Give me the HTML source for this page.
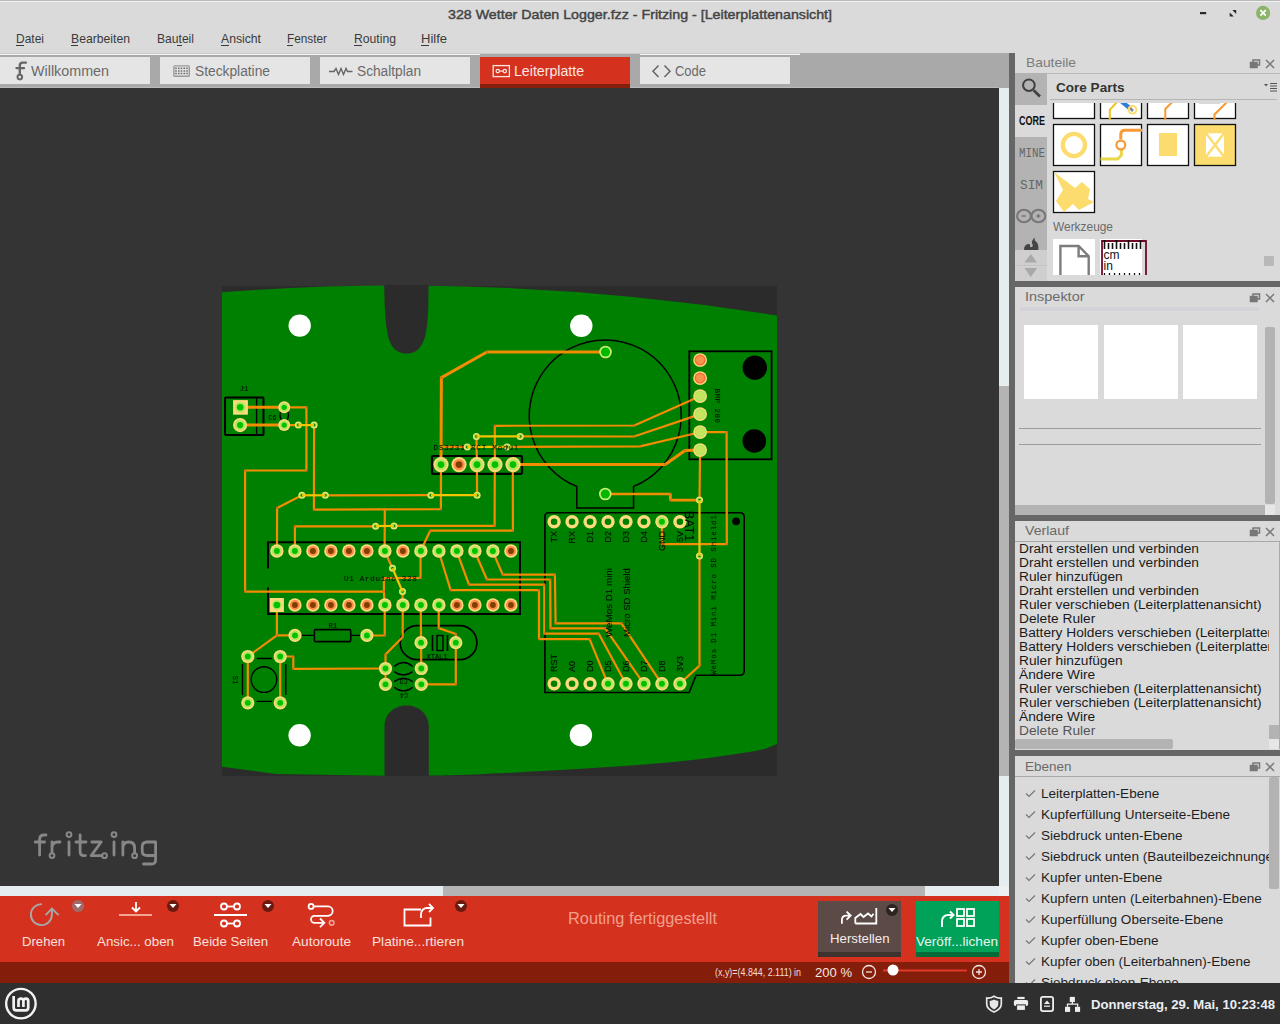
<!DOCTYPE html>
<html><head><meta charset="utf-8">
<style>
*{margin:0;padding:0;box-sizing:border-box}
html,body{width:1280px;height:1024px;overflow:hidden;background:#dadada;font-family:"Liberation Sans",sans-serif;position:relative}
.a{position:absolute}
.t{position:absolute;white-space:nowrap;line-height:1}
svg{position:absolute;overflow:visible}
</style></head><body>
<div class="a" style="left:0px;top:0px;width:1280px;height:1px;background:#b9b9b9;"></div>
<div class="a" style="left:0px;top:1px;width:1280px;height:1px;background:#f2f2f2;"></div>
<div class="t" style="left:448px;top:7.57px;font-size:13.5px;color:#444;font-family:'Liberation Sans',sans-serif;transform:scaleX(1.0537);transform-origin:0 0;-webkit-text-stroke:0.45px #444;">328 Wetter Daten Logger.fzz - Fritzing - [Leiterplattenansicht]</div>
<svg style="left:0;top:0" width="1280" height="28"><rect x="1200" y="12" width="6.2" height="2.2" fill="#2a2a2a"/><path d="M1232.3 10 H1236.2 V13.9 Z M1229.7 12.4 L1233.8 16.5 H1229.7 Z" fill="#2a2a2a"/><circle cx="1263.1" cy="12.9" r="7.1" fill="#8db36a"/><path d="M1260.4 10.2 l5.4 5.4 M1265.8 10.2 l-5.4 5.4" stroke="#fff" stroke-width="1.7"/></svg><div class="t" style="left:16px;top:32.00px;font-size:13px;color:#3a3a3a;font-family:'Liberation Sans',sans-serif;transform:scaleX(0.9226);transform-origin:0 0;">Datei</div>
<div class="t" style="left:71px;top:32.00px;font-size:13px;color:#3a3a3a;font-family:'Liberation Sans',sans-serif;transform:scaleX(0.9383);transform-origin:0 0;">Bearbeiten</div>
<div class="t" style="left:157px;top:32.00px;font-size:13px;color:#3a3a3a;font-family:'Liberation Sans',sans-serif;transform:scaleX(0.9308);transform-origin:0 0;">Bauteil</div>
<div class="t" style="left:221px;top:32.00px;font-size:13px;color:#3a3a3a;font-family:'Liberation Sans',sans-serif;transform:scaleX(0.9383);transform-origin:0 0;">Ansicht</div>
<div class="t" style="left:287px;top:32.00px;font-size:13px;color:#3a3a3a;font-family:'Liberation Sans',sans-serif;transform:scaleX(0.9076);transform-origin:0 0;">Fenster</div>
<div class="t" style="left:354px;top:32.00px;font-size:13px;color:#3a3a3a;font-family:'Liberation Sans',sans-serif;transform:scaleX(0.9373);transform-origin:0 0;">Routing</div>
<div class="t" style="left:421px;top:32.00px;font-size:13px;color:#3a3a3a;font-family:'Liberation Sans',sans-serif;transform:scaleX(0.9997);transform-origin:0 0;">Hilfe</div>
<div class="a" style="left:16px;top:45px;width:8px;height:1px;background:#3a3a3a;"></div>
<div class="a" style="left:71px;top:45px;width:7px;height:1px;background:#3a3a3a;"></div>
<div class="a" style="left:177px;top:45px;width:5px;height:1px;background:#3a3a3a;"></div>
<div class="a" style="left:221px;top:45px;width:8px;height:1px;background:#3a3a3a;"></div>
<div class="a" style="left:287px;top:45px;width:6px;height:1px;background:#3a3a3a;"></div>
<div class="a" style="left:354px;top:45px;width:8px;height:1px;background:#3a3a3a;"></div>
<div class="a" style="left:421px;top:45px;width:8px;height:1px;background:#3a3a3a;"></div>
<div class="a" style="left:0px;top:53px;width:1009px;height:35px;background:#a9a9a9;"></div>
<div class="a" style="left:0px;top:53px;width:800px;height:1px;background:#c8c8c8;"></div>
<div class="a" style="left:0px;top:54px;width:480px;height:1px;background:#f6f6f6;"></div>
<div class="a" style="left:640px;top:54px;width:160px;height:1px;background:#f6f6f6;"></div>
<div class="a" style="left:0px;top:87px;width:999px;height:1px;background:#b9b9b9;"></div>
<div class="a" style="left:0px;top:57px;width:150px;height:27px;background:#e5e5e5;"></div>
<div class="a" style="left:160px;top:57px;width:150px;height:27px;background:#e5e5e5;"></div>
<div class="a" style="left:320px;top:57px;width:150px;height:27px;background:#e5e5e5;"></div>
<div class="a" style="left:640px;top:57px;width:150px;height:27px;background:#e5e5e5;"></div>
<div class="a" style="left:480px;top:57px;width:150px;height:27px;background:#d5311f;"></div>
<div class="a" style="left:480px;top:84px;width:150px;height:4px;background:#85200d;"></div>
<div class="t" style="left:31px;top:64.15px;font-size:14px;color:#6a6a6a;font-family:'Liberation Sans',sans-serif;transform:scaleX(1.0232);transform-origin:0 0;">Willkommen</div>
<div class="t" style="left:195px;top:64.15px;font-size:14px;color:#6a6a6a;font-family:'Liberation Sans',sans-serif;transform:scaleX(0.9833);transform-origin:0 0;">Steckplatine</div>
<div class="t" style="left:357px;top:64.15px;font-size:14px;color:#6a6a6a;font-family:'Liberation Sans',sans-serif;transform:scaleX(0.9789);transform-origin:0 0;">Schaltplan</div>
<div class="t" style="left:514px;top:64.15px;font-size:14px;color:#fbe6e2;font-family:'Liberation Sans',sans-serif;transform:scaleX(1.0105);transform-origin:0 0;">Leiterplatte</div>
<div class="t" style="left:675px;top:64.15px;font-size:14px;color:#6a6a6a;font-family:'Liberation Sans',sans-serif;transform:scaleX(0.9262);transform-origin:0 0;">Code</div>
<svg style="left:0;top:53px" width="800" height="35"><path d="M19.8 21.5 V12.5 Q19.8 9.6 22.6 9.6 L25.9 9.6" stroke="#666" stroke-width="2.4" fill="none" stroke-linecap="round"/><path d="M16.5 15.2 H24" stroke="#666" stroke-width="2.3" stroke-linecap="round"/><circle cx="19.8" cy="24.1" r="2.3" stroke="#666" stroke-width="2" fill="none"/><rect x="173.9" y="12.9" width="15.4" height="10.4" rx="0.8" fill="none" stroke="#9a9a9a" stroke-width="1.4"/><rect x="175.2" y="14.55" width="1.6" height="1.5" fill="#6e6e6e"/><rect x="175.2" y="17.25" width="1.6" height="1.5" fill="#6e6e6e"/><rect x="175.2" y="19.75" width="1.6" height="1.5" fill="#6e6e6e"/><rect x="178" y="14.55" width="1.6" height="1.5" fill="#6e6e6e"/><rect x="178" y="17.25" width="1.6" height="1.5" fill="#6e6e6e"/><rect x="178" y="19.75" width="1.6" height="1.5" fill="#6e6e6e"/><rect x="180.7" y="14.55" width="1.6" height="1.5" fill="#6e6e6e"/><rect x="180.7" y="17.25" width="1.6" height="1.5" fill="#6e6e6e"/><rect x="180.7" y="19.75" width="1.6" height="1.5" fill="#6e6e6e"/><rect x="183.5" y="14.55" width="1.6" height="1.5" fill="#6e6e6e"/><rect x="183.5" y="17.25" width="1.6" height="1.5" fill="#6e6e6e"/><rect x="183.5" y="19.75" width="1.6" height="1.5" fill="#6e6e6e"/><rect x="186.2" y="14.55" width="1.6" height="1.5" fill="#6e6e6e"/><rect x="186.2" y="17.25" width="1.6" height="1.5" fill="#6e6e6e"/><rect x="186.2" y="19.75" width="1.6" height="1.5" fill="#6e6e6e"/><path d="M329 18.5 h5 l2 -3 l2.5 6 l2.5 -6 l2.5 6 l2.5 -6 l1.5 3 h5" stroke="#666" stroke-width="1.4" fill="none"/><rect x="493.2" y="12.6" width="16.2" height="11" fill="none" stroke="#fbe6e2" stroke-width="1.3"/><circle cx="497.8" cy="18.1" r="1.7" fill="none" stroke="#fbe6e2" stroke-width="1.2"/><circle cx="504.8" cy="18.1" r="1.7" fill="none" stroke="#fbe6e2" stroke-width="1.2"/><path d="M499.5 18.1 h3.6" stroke="#fbe6e2" stroke-width="1.2"/><path d="M658.5 12.5 l-5.5 5.8 l5.5 5.8 M664.5 12.5 l5.5 5.8 l-5.5 5.8" stroke="#666" stroke-width="1.5" fill="none"/></svg><div class="a" style="left:0px;top:88px;width:999px;height:798px;background:#343434;overflow:hidden"></div>
<svg style="left:0;top:0" width="1000" height="900"><rect x="222" y="286" width="555" height="490" fill="#2b2b2b"/><path d="M222 292.2 Q499.5 271.4 777 315.5 L777 744.1 C773.75 745.33 770.17 748.07 757.50 750.50 C744.83 752.93 719.75 756.57 701.00 758.90 C682.25 761.23 663.72 762.95 645.00 764.50 C626.28 766.05 607.45 767.02 588.70 768.20 C569.95 769.38 551.28 770.57 532.50 771.60 C513.72 772.63 493.28 773.73 476.00 774.40 C458.72 775.07 436.67 775.40 428.80 775.60 L428.8 727 C428.8 713 418 705.6 406.6 705.6 C395 705.6 384.5 713 384.5 727 L384.5 775.8 L276 774 L222 766.7 Z" fill="#008000"/><path d="M384.2 285 L428.6 285 C428.4 310 428 325 425 337 C421 350 414 353.6 406.5 353.6 C399 353.6 392 350 388.5 338 C385.5 326 384.6 310 384.2 285 Z" fill="#2b2b2b"/><circle cx="299.7" cy="325.6" r="11.2" fill="#fff"/><circle cx="581.3" cy="325.8" r="11.2" fill="#fff"/><circle cx="299.6" cy="735.3" r="11.2" fill="#fff"/><circle cx="580.9" cy="735.2" r="11.2" fill="#fff"/><rect x="225" y="397.5" width="38.5" height="37.5" rx="1" stroke="#000" fill="none" stroke-width="2"/><path d="M256.6 398 V434.5" stroke="#000" fill="none" stroke-width="1.4"/><path d="M281.5 410 q-3 5 0 10 M287 410 q3 5 0 10" stroke="#000" fill="none" stroke-width="1.4"/><path d="M576.8 486.4 A76 76 0 1 1 633.6 486.4 L633.6 507.9 L576.8 507.9 Z" stroke="#000" fill="none" stroke-width="1.5"/><rect x="432" y="456" width="90" height="17.8" rx="1" stroke="#000" fill="none" stroke-width="2.2"/><rect x="689.3" y="351.3" width="82.3" height="108" stroke="#000" fill="none" stroke-width="1.8"/><circle cx="754.8" cy="367.7" r="12.2" fill="#000"/><circle cx="754.3" cy="441" r="11.8" fill="#000"/><path d="M268 568.4 V542.2 H520 V613.9 H268 V587.4" stroke="#000" fill="none" stroke-width="2"/><path d="M544.9 692.5 V516.5 Q544.9 512.7 548.7 512.7 H740 Q744.2 512.7 744.2 517 V671 Q744.2 675.2 740 675.2 H696.1 L689.2 692.5 Z" stroke="#000" fill="none" stroke-width="1.6"/><circle cx="736.1" cy="521.3" r="3.9" fill="#000"/><path d="M300 635.4 H314.4 M350.7 635.4 H362" stroke="#000" fill="none" stroke-width="1.4"/><rect x="314.4" y="629.6" width="36.3" height="12" rx="1.2" stroke="#000" fill="none" stroke-width="1.6"/><circle cx="264" cy="679.6" r="12.8" stroke="#000" fill="none" stroke-width="1.4"/><path d="M256.8 658.5 H272 M256.8 701.4 H272 M242.5 664 V695 M285.8 664 V695" stroke="#000" fill="none" stroke-width="1.4"/><rect x="400.2" y="625.7" width="76.7" height="34" rx="17" stroke="#000" fill="none" stroke-width="1.7"/><path d="M432.5 635 V651 M447.5 635 V651" stroke="#000" fill="none" stroke-width="1.6"/><rect x="437" y="635.5" width="6" height="15" stroke="#000" fill="none" stroke-width="1.4"/><path d="M394.2 666.5 Q403.5 658.7 412.7 666.5 M394.2 671.6 Q403.5 678.4 412.7 671.6 M394.2 681.6 Q403.5 674.8 412.7 681.6 M394.2 687.2 Q403.5 694.6 412.7 687.2" stroke="#000" fill="none" stroke-width="1.4"/><path d="M247 407.3 L284.2 407.3" stroke="#f28c00" stroke-width="3" fill="none" stroke-linejoin="round" stroke-linecap="round"/><path d="M247 425.1 L284.2 425.1" stroke="#f28c00" stroke-width="3" fill="none" stroke-linejoin="round" stroke-linecap="round"/><path d="M284.2 407.3 L306.4 407.3 L306.4 470.5 L245.1 470.5 L245.1 591.6 L383.9 591.6 L384.6 605" stroke="#f28c00" stroke-width="2.2" fill="none" stroke-linejoin="round" stroke-linecap="round"/><path d="M284.2 425.1 L298.3 425.1" stroke="#f28c00" stroke-width="2.2" fill="none" stroke-linejoin="round" stroke-linecap="round"/><path d="M314.1 425.1 L313.9 509.7 L440.9 509.2 L441 464.6" stroke="#f28c00" stroke-width="2.2" fill="none" stroke-linejoin="round" stroke-linecap="round"/><path d="M441 464.6 L441.4 377.6 L486.9 352 L605.5 352" stroke="#f28c00" stroke-width="3" fill="none" stroke-linejoin="round" stroke-linecap="round"/><path d="M441 446.9 L467.2 446.9" stroke="#f28c00" stroke-width="2.2" fill="none" stroke-linejoin="round" stroke-linecap="round"/><path d="M507 446.9 L640 446.4 L689.4 434.7 L700.1 432.1" stroke="#f28c00" stroke-width="2.2" fill="none" stroke-linejoin="round" stroke-linecap="round"/><path d="M476.4 436.4 L476.9 464.6" stroke="#f28c00" stroke-width="2.2" fill="none" stroke-linejoin="round" stroke-linecap="round"/><path d="M520.2 436.4 L634 436.5 L689.4 417.9 L700.1 414" stroke="#f28c00" stroke-width="2.2" fill="none" stroke-linejoin="round" stroke-linecap="round"/><path d="M494.8 464.6 L494.8 425.8 L634.2 425.5 L689.4 401 L700.1 395.9" stroke="#f28c00" stroke-width="2.2" fill="none" stroke-linejoin="round" stroke-linecap="round"/><path d="M512.8 464.6 L665.2 464.5 L685 450.5 L700.1 450" stroke="#f28c00" stroke-width="3" fill="none" stroke-linejoin="round" stroke-linecap="round"/><path d="M700.1 432.1 L726.6 432.1 L726.8 544.2 L661.9 544.2 L661.9 521.8" stroke="#f28c00" stroke-width="2.2" fill="none" stroke-linejoin="round" stroke-linecap="round"/><path d="M700.1 450 L699.5 500.1" stroke="#f28c00" stroke-width="2.2" fill="none" stroke-linejoin="round" stroke-linecap="round"/><path d="M699.5 556.1 L699.5 665.6 L679.7 683.8" stroke="#f28c00" stroke-width="2.2" fill="none" stroke-linejoin="round" stroke-linecap="round"/><path d="M605.3 494 L670.4 494 L670.4 500.1 L699.5 500.1" stroke="#f28c00" stroke-width="2.7" fill="none" stroke-linejoin="round" stroke-linecap="round"/><path d="M301.9 495.3 L277.1 508.1 L277 551" stroke="#f28c00" stroke-width="2.2" fill="none" stroke-linejoin="round" stroke-linecap="round"/><path d="M325.3 495.3 L430.9 495.2" stroke="#f28c00" stroke-width="2.2" fill="none" stroke-linejoin="round" stroke-linecap="round"/><path d="M477.1 495.2 L476.9 464.6" stroke="#f28c00" stroke-width="2.2" fill="none" stroke-linejoin="round" stroke-linecap="round"/><path d="M294.9 551 L294.9 526.4 L375.6 526.4" stroke="#f28c00" stroke-width="2.2" fill="none" stroke-linejoin="round" stroke-linecap="round"/><path d="M394 525.9 L494.6 525.9 L494.8 464.6" stroke="#f28c00" stroke-width="2.2" fill="none" stroke-linejoin="round" stroke-linecap="round"/><path d="M384.8 509.5 L384.6 551" stroke="#f28c00" stroke-width="2.2" fill="none" stroke-linejoin="round" stroke-linecap="round"/><path d="M420.6 551 L430.2 530.7 L512.9 530.7 L512.8 464.6" stroke="#f28c00" stroke-width="2.2" fill="none" stroke-linejoin="round" stroke-linecap="round"/><path d="M384.6 551 L392.5 568.3" stroke="#f28c00" stroke-width="2.2" fill="none" stroke-linejoin="round" stroke-linecap="round"/><path d="M402.5 591.6 L402.6 605" stroke="#f28c00" stroke-width="2.2" fill="none" stroke-linejoin="round" stroke-linecap="round"/><path d="M420.6 551 L420.5 578 L383.9 578 L383.9 591.6" stroke="#f28c00" stroke-width="2.2" fill="none" stroke-linejoin="round" stroke-linecap="round"/><path d="M438.6 551 L450.7 590.2 L539 590.2 L539 639.1 L589.6 639.1 L607.9 683.8" stroke="#f28c00" stroke-width="2.2" fill="none" stroke-linejoin="round" stroke-linecap="round"/><path d="M456.6 551 L469 584.7 L544.3 584.7 L544.3 633.7 L598.8 633.7 L625.8 683.8" stroke="#f28c00" stroke-width="2.2" fill="none" stroke-linejoin="round" stroke-linecap="round"/><path d="M474.6 551 L486.9 579.5 L550.2 579.5 L550.5 628.4 L605.2 628.4 L643.8 683.8" stroke="#f28c00" stroke-width="2.2" fill="none" stroke-linejoin="round" stroke-linecap="round"/><path d="M492.6 551 L502.7 574.6 L554.9 574.6 L555.6 623.4 L621.4 623.4 L661.8 683.8" stroke="#f28c00" stroke-width="2.2" fill="none" stroke-linejoin="round" stroke-linecap="round"/><path d="M276.9 605 L276.9 635.4 L295 635.4" stroke="#f28c00" stroke-width="2.2" fill="none" stroke-linejoin="round" stroke-linecap="round"/><path d="M276.9 635.4 L247.8 656.5" stroke="#f28c00" stroke-width="2.2" fill="none" stroke-linejoin="round" stroke-linecap="round"/><path d="M366.9 635.5 L384.7 635.5 L384.7 605" stroke="#f28c00" stroke-width="2.2" fill="none" stroke-linejoin="round" stroke-linecap="round"/><path d="M247.8 656.5 L247.8 702.8" stroke="#f28c00" stroke-width="2.2" fill="none" stroke-linejoin="round" stroke-linecap="round"/><path d="M280.2 656.5 L280.2 702.8" stroke="#f28c00" stroke-width="2.2" fill="none" stroke-linejoin="round" stroke-linecap="round"/><path d="M280.2 656.5 L293.3 656.5 L293.3 668.8 L385.5 668.5" stroke="#f28c00" stroke-width="2.2" fill="none" stroke-linejoin="round" stroke-linecap="round"/><path d="M402.7 605 L402.7 636.9 L385.5 654.5 L385.5 684.3" stroke="#f28c00" stroke-width="2.2" fill="none" stroke-linejoin="round" stroke-linecap="round"/><path d="M420.7 605 L421.3 668.5" stroke="#f28c00" stroke-width="2.2" fill="none" stroke-linejoin="round" stroke-linecap="round"/><path d="M438.7 605 L438.7 628.1 L455.8 634 L455.8 684.3 L421.3 684.3" stroke="#f28c00" stroke-width="2.2" fill="none" stroke-linejoin="round" stroke-linecap="round"/><rect x="233.1" y="400.1" width="14.8" height="14.6" fill="#fddb7c"/><circle cx="240.4" cy="407.2" r="5.5" fill="#b4e65c"/><circle cx="240.2" cy="407.2" r="3.3" fill="#00c000"/><circle cx="240.1" cy="425.1" r="7.05" fill="#fddb7c"/><circle cx="240.1" cy="425.1" r="5.2875" fill="#b4e65c"/><circle cx="240.1" cy="425.1" r="3.102" fill="#00c000"/><circle cx="284.2" cy="407.3" r="6" fill="#fddb7c"/><circle cx="284.2" cy="407.3" r="4.5" fill="#b4e65c"/><circle cx="284.2" cy="407.3" r="2.64" fill="#00c000"/><circle cx="284.2" cy="425.1" r="6" fill="#fddb7c"/><circle cx="284.2" cy="425.1" r="4.5" fill="#b4e65c"/><circle cx="284.2" cy="425.1" r="2.64" fill="#00c000"/><circle cx="298.3" cy="425.1" r="3.5" fill="#efe27a"/><circle cx="298.3" cy="425.1" r="2.4" fill="#98e63a"/><circle cx="298.3" cy="425.1" r="1.25" fill="#067000"/><circle cx="314.1" cy="425.1" r="3.5" fill="#efe27a"/><circle cx="314.1" cy="425.1" r="2.4" fill="#98e63a"/><circle cx="314.1" cy="425.1" r="1.25" fill="#067000"/><circle cx="476.4" cy="436.4" r="3.5" fill="#efe27a"/><circle cx="476.4" cy="436.4" r="2.4" fill="#98e63a"/><circle cx="476.4" cy="436.4" r="1.25" fill="#067000"/><circle cx="520.2" cy="436.4" r="3.5" fill="#efe27a"/><circle cx="520.2" cy="436.4" r="2.4" fill="#98e63a"/><circle cx="520.2" cy="436.4" r="1.25" fill="#067000"/><circle cx="467.2" cy="446.9" r="3.5" fill="#efe27a"/><circle cx="467.2" cy="446.9" r="2.4" fill="#98e63a"/><circle cx="467.2" cy="446.9" r="1.25" fill="#067000"/><circle cx="507" cy="446.9" r="3.5" fill="#efe27a"/><circle cx="507" cy="446.9" r="2.4" fill="#98e63a"/><circle cx="507" cy="446.9" r="1.25" fill="#067000"/><circle cx="301.9" cy="495.3" r="3.5" fill="#efe27a"/><circle cx="301.9" cy="495.3" r="2.4" fill="#98e63a"/><circle cx="301.9" cy="495.3" r="1.25" fill="#067000"/><circle cx="325.3" cy="495.3" r="3.5" fill="#efe27a"/><circle cx="325.3" cy="495.3" r="2.4" fill="#98e63a"/><circle cx="325.3" cy="495.3" r="1.25" fill="#067000"/><circle cx="430.9" cy="495.2" r="3.5" fill="#efe27a"/><circle cx="430.9" cy="495.2" r="2.4" fill="#98e63a"/><circle cx="430.9" cy="495.2" r="1.25" fill="#067000"/><circle cx="477.1" cy="495.2" r="3.5" fill="#efe27a"/><circle cx="477.1" cy="495.2" r="2.4" fill="#98e63a"/><circle cx="477.1" cy="495.2" r="1.25" fill="#067000"/><circle cx="375.6" cy="526.2" r="3.5" fill="#efe27a"/><circle cx="375.6" cy="526.2" r="2.4" fill="#98e63a"/><circle cx="375.6" cy="526.2" r="1.25" fill="#067000"/><circle cx="394" cy="525.9" r="3.5" fill="#efe27a"/><circle cx="394" cy="525.9" r="2.4" fill="#98e63a"/><circle cx="394" cy="525.9" r="1.25" fill="#067000"/><circle cx="392.5" cy="568.3" r="3.5" fill="#efe27a"/><circle cx="392.5" cy="568.3" r="2.4" fill="#98e63a"/><circle cx="392.5" cy="568.3" r="1.25" fill="#067000"/><circle cx="402.5" cy="591.6" r="3.5" fill="#efe27a"/><circle cx="402.5" cy="591.6" r="2.4" fill="#98e63a"/><circle cx="402.5" cy="591.6" r="1.25" fill="#067000"/><circle cx="699.5" cy="500.1" r="3.5" fill="#efe27a"/><circle cx="699.5" cy="500.1" r="2.4" fill="#98e63a"/><circle cx="699.5" cy="500.1" r="1.25" fill="#067000"/><circle cx="699.5" cy="556.1" r="3.5" fill="#efe27a"/><circle cx="699.5" cy="556.1" r="2.4" fill="#98e63a"/><circle cx="699.5" cy="556.1" r="1.25" fill="#067000"/><circle cx="306.4" cy="407.3" r="1.1" fill="#d8652a"/><circle cx="306.4" cy="470.5" r="1.1" fill="#d8652a"/><circle cx="245.1" cy="470.5" r="1.1" fill="#d8652a"/><circle cx="245.1" cy="591.6" r="1.1" fill="#d8652a"/><circle cx="383.9" cy="591.6" r="1.1" fill="#d8652a"/><circle cx="313.9" cy="509.7" r="1.1" fill="#d8652a"/><circle cx="440.9" cy="509.2" r="1.1" fill="#d8652a"/><circle cx="441.4" cy="377.6" r="1.1" fill="#d8652a"/><circle cx="486.9" cy="352" r="1.1" fill="#d8652a"/><circle cx="640" cy="446.4" r="1.1" fill="#d8652a"/><circle cx="689.4" cy="434.7" r="1.1" fill="#d8652a"/><circle cx="634" cy="436.5" r="1.1" fill="#d8652a"/><circle cx="689.4" cy="417.9" r="1.1" fill="#d8652a"/><circle cx="494.8" cy="425.8" r="1.1" fill="#d8652a"/><circle cx="634.2" cy="425.5" r="1.1" fill="#d8652a"/><circle cx="689.4" cy="401" r="1.1" fill="#d8652a"/><circle cx="665.2" cy="464.5" r="1.1" fill="#d8652a"/><circle cx="685" cy="450.5" r="1.1" fill="#d8652a"/><circle cx="726.6" cy="432.1" r="1.1" fill="#d8652a"/><circle cx="726.8" cy="544.2" r="1.1" fill="#d8652a"/><circle cx="661.9" cy="544.2" r="1.1" fill="#d8652a"/><circle cx="699.5" cy="665.6" r="1.1" fill="#d8652a"/><circle cx="670.4" cy="494" r="1.1" fill="#d8652a"/><circle cx="670.4" cy="500.1" r="1.1" fill="#d8652a"/><circle cx="277.1" cy="508.1" r="1.1" fill="#d8652a"/><circle cx="294.9" cy="526.4" r="1.1" fill="#d8652a"/><circle cx="494.6" cy="525.9" r="1.1" fill="#d8652a"/><circle cx="430.2" cy="530.7" r="1.1" fill="#d8652a"/><circle cx="512.9" cy="530.7" r="1.1" fill="#d8652a"/><circle cx="420.5" cy="578" r="1.1" fill="#d8652a"/><circle cx="383.9" cy="578" r="1.1" fill="#d8652a"/><circle cx="450.7" cy="590.2" r="1.1" fill="#d8652a"/><circle cx="539" cy="590.2" r="1.1" fill="#d8652a"/><circle cx="539" cy="639.1" r="1.1" fill="#d8652a"/><circle cx="589.6" cy="639.1" r="1.1" fill="#d8652a"/><circle cx="469" cy="584.7" r="1.1" fill="#d8652a"/><circle cx="544.3" cy="584.7" r="1.1" fill="#d8652a"/><circle cx="544.3" cy="633.7" r="1.1" fill="#d8652a"/><circle cx="598.8" cy="633.7" r="1.1" fill="#d8652a"/><circle cx="486.9" cy="579.5" r="1.1" fill="#d8652a"/><circle cx="550.2" cy="579.5" r="1.1" fill="#d8652a"/><circle cx="550.5" cy="628.4" r="1.1" fill="#d8652a"/><circle cx="605.2" cy="628.4" r="1.1" fill="#d8652a"/><circle cx="502.7" cy="574.6" r="1.1" fill="#d8652a"/><circle cx="554.9" cy="574.6" r="1.1" fill="#d8652a"/><circle cx="555.6" cy="623.4" r="1.1" fill="#d8652a"/><circle cx="621.4" cy="623.4" r="1.1" fill="#d8652a"/><circle cx="276.9" cy="635.4" r="1.1" fill="#d8652a"/><circle cx="384.7" cy="635.5" r="1.1" fill="#d8652a"/><circle cx="293.3" cy="656.5" r="1.1" fill="#d8652a"/><circle cx="293.3" cy="668.8" r="1.1" fill="#d8652a"/><circle cx="402.7" cy="636.9" r="1.1" fill="#d8652a"/><circle cx="385.5" cy="654.5" r="1.1" fill="#d8652a"/><circle cx="438.7" cy="628.1" r="1.1" fill="#d8652a"/><circle cx="455.8" cy="634" r="1.1" fill="#d8652a"/><circle cx="455.8" cy="684.3" r="1.1" fill="#d8652a"/><path d="M298.3 425.1 L314.1 425.1" stroke="#f5c400" stroke-width="2.2" fill="none" stroke-linecap="butt"/><path d="M467.2 446.9 L507 446.9" stroke="#f5c400" stroke-width="2.2" fill="none" stroke-linecap="butt"/><path d="M476.4 436.4 L520.2 436.4" stroke="#f5c400" stroke-width="2.2" fill="none" stroke-linecap="butt"/><path d="M699.5 500.1 L699.5 556.1" stroke="#f5c400" stroke-width="2.2" fill="none" stroke-linecap="butt"/><path d="M301.9 495.3 L325.3 495.3" stroke="#f5c400" stroke-width="2.2" fill="none" stroke-linecap="butt"/><path d="M430.9 495.2 L477.1 495.2" stroke="#f5c400" stroke-width="2.2" fill="none" stroke-linecap="butt"/><path d="M375.6 526 L394 526" stroke="#f5c400" stroke-width="2.2" fill="none" stroke-linecap="butt"/><path d="M392.5 568.3 L402.5 591.6" stroke="#f5c400" stroke-width="2.2" fill="none" stroke-linecap="butt"/><circle cx="605.5" cy="352" r="6.3" fill="#c6ee72"/><circle cx="605.5" cy="352" r="4.6" fill="#00b800"/><circle cx="605.3" cy="494" r="6.3" fill="#c6ee72"/><circle cx="605.3" cy="494" r="4.6" fill="#00b800"/><circle cx="441" cy="464.6" r="7.6" fill="#fddb7c"/><circle cx="441" cy="464.6" r="5.7" fill="#b4e65c"/><circle cx="441" cy="464.6" r="3.344" fill="#00c000"/><circle cx="459" cy="464.6" r="7.6" fill="#fddb7c"/><circle cx="459" cy="464.6" r="5.7" fill="#ff8a4a"/><circle cx="459" cy="464.6" r="3.344" fill="#7f3f00"/><circle cx="477" cy="464.6" r="7.6" fill="#fddb7c"/><circle cx="477" cy="464.6" r="5.7" fill="#b4e65c"/><circle cx="477" cy="464.6" r="3.344" fill="#00c000"/><circle cx="495" cy="464.6" r="7.6" fill="#fddb7c"/><circle cx="495" cy="464.6" r="5.7" fill="#b4e65c"/><circle cx="495" cy="464.6" r="3.344" fill="#00c000"/><circle cx="513" cy="464.6" r="7.6" fill="#fddb7c"/><circle cx="513" cy="464.6" r="5.7" fill="#b4e65c"/><circle cx="513" cy="464.6" r="3.344" fill="#00c000"/><circle cx="700.1" cy="360.1" r="6.9" fill="#fddb7c"/><circle cx="700.1" cy="360.1" r="5.52" fill="#f96d3a"/><circle cx="700.1" cy="360.1" r="4.14" fill="#f7944c"/><circle cx="700.1" cy="378.1" r="6.9" fill="#fddb7c"/><circle cx="700.1" cy="378.1" r="5.52" fill="#f96d3a"/><circle cx="700.1" cy="378.1" r="4.14" fill="#f7944c"/><circle cx="700.1" cy="396.1" r="6.9" fill="#fddb7c"/><circle cx="700.1" cy="396.1" r="5.52" fill="#b4e65c"/><circle cx="700.1" cy="396.1" r="4.14" fill="#c8e45e"/><circle cx="700.1" cy="414.1" r="6.9" fill="#fddb7c"/><circle cx="700.1" cy="414.1" r="5.52" fill="#b4e65c"/><circle cx="700.1" cy="414.1" r="4.14" fill="#c8e45e"/><circle cx="700.1" cy="432.1" r="6.9" fill="#fddb7c"/><circle cx="700.1" cy="432.1" r="5.52" fill="#b4e65c"/><circle cx="700.1" cy="432.1" r="4.14" fill="#c8e45e"/><circle cx="700.1" cy="450.1" r="6.9" fill="#fddb7c"/><circle cx="700.1" cy="450.1" r="5.52" fill="#b4e65c"/><circle cx="700.1" cy="450.1" r="4.14" fill="#c8e45e"/><circle cx="276.9" cy="551" r="6.7" fill="#fddb7c"/><circle cx="276.9" cy="551" r="5.025" fill="#b4e65c"/><circle cx="276.9" cy="551" r="2.948" fill="#00c000"/><rect x="269.8" y="598" width="14.1" height="14" fill="#fddb7c"/><circle cx="276.9" cy="605" r="4.8" fill="#b4e65c"/><circle cx="276.9" cy="605" r="3.3" fill="#00c000"/><circle cx="294.9" cy="551" r="6.7" fill="#fddb7c"/><circle cx="294.9" cy="551" r="5.025" fill="#b4e65c"/><circle cx="294.9" cy="551" r="2.948" fill="#00c000"/><circle cx="294.9" cy="605" r="6.7" fill="#fddb7c"/><circle cx="294.9" cy="605" r="5.025" fill="#ff8a4a"/><circle cx="294.9" cy="605" r="2.948" fill="#7f3f00"/><circle cx="312.9" cy="551" r="6.7" fill="#fddb7c"/><circle cx="312.9" cy="551" r="5.025" fill="#ff8a4a"/><circle cx="312.9" cy="551" r="2.948" fill="#7f3f00"/><circle cx="312.9" cy="605" r="6.7" fill="#fddb7c"/><circle cx="312.9" cy="605" r="5.025" fill="#ff8a4a"/><circle cx="312.9" cy="605" r="2.948" fill="#7f3f00"/><circle cx="330.9" cy="551" r="6.7" fill="#fddb7c"/><circle cx="330.9" cy="551" r="5.025" fill="#ff8a4a"/><circle cx="330.9" cy="551" r="2.948" fill="#7f3f00"/><circle cx="330.9" cy="605" r="6.7" fill="#fddb7c"/><circle cx="330.9" cy="605" r="5.025" fill="#ff8a4a"/><circle cx="330.9" cy="605" r="2.948" fill="#7f3f00"/><circle cx="348.9" cy="551" r="6.7" fill="#fddb7c"/><circle cx="348.9" cy="551" r="5.025" fill="#ff8a4a"/><circle cx="348.9" cy="551" r="2.948" fill="#7f3f00"/><circle cx="348.9" cy="605" r="6.7" fill="#fddb7c"/><circle cx="348.9" cy="605" r="5.025" fill="#ff8a4a"/><circle cx="348.9" cy="605" r="2.948" fill="#7f3f00"/><circle cx="366.9" cy="551" r="6.7" fill="#fddb7c"/><circle cx="366.9" cy="551" r="5.025" fill="#ff8a4a"/><circle cx="366.9" cy="551" r="2.948" fill="#7f3f00"/><circle cx="366.9" cy="605" r="6.7" fill="#fddb7c"/><circle cx="366.9" cy="605" r="5.025" fill="#ff8a4a"/><circle cx="366.9" cy="605" r="2.948" fill="#7f3f00"/><circle cx="384.9" cy="551" r="6.7" fill="#fddb7c"/><circle cx="384.9" cy="551" r="5.025" fill="#b4e65c"/><circle cx="384.9" cy="551" r="2.948" fill="#00c000"/><circle cx="384.9" cy="605" r="6.7" fill="#fddb7c"/><circle cx="384.9" cy="605" r="5.025" fill="#b4e65c"/><circle cx="384.9" cy="605" r="2.948" fill="#00c000"/><circle cx="402.9" cy="551" r="6.7" fill="#fddb7c"/><circle cx="402.9" cy="551" r="5.025" fill="#ff8a4a"/><circle cx="402.9" cy="551" r="2.948" fill="#7f3f00"/><circle cx="402.9" cy="605" r="6.7" fill="#fddb7c"/><circle cx="402.9" cy="605" r="5.025" fill="#b4e65c"/><circle cx="402.9" cy="605" r="2.948" fill="#00c000"/><circle cx="420.9" cy="551" r="6.7" fill="#fddb7c"/><circle cx="420.9" cy="551" r="5.025" fill="#b4e65c"/><circle cx="420.9" cy="551" r="2.948" fill="#00c000"/><circle cx="420.9" cy="605" r="6.7" fill="#fddb7c"/><circle cx="420.9" cy="605" r="5.025" fill="#b4e65c"/><circle cx="420.9" cy="605" r="2.948" fill="#00c000"/><circle cx="438.9" cy="551" r="6.7" fill="#fddb7c"/><circle cx="438.9" cy="551" r="5.025" fill="#b4e65c"/><circle cx="438.9" cy="551" r="2.948" fill="#00c000"/><circle cx="438.9" cy="605" r="6.7" fill="#fddb7c"/><circle cx="438.9" cy="605" r="5.025" fill="#b4e65c"/><circle cx="438.9" cy="605" r="2.948" fill="#00c000"/><circle cx="456.9" cy="551" r="6.7" fill="#fddb7c"/><circle cx="456.9" cy="551" r="5.025" fill="#b4e65c"/><circle cx="456.9" cy="551" r="2.948" fill="#00c000"/><circle cx="456.9" cy="605" r="6.7" fill="#fddb7c"/><circle cx="456.9" cy="605" r="5.025" fill="#ff8a4a"/><circle cx="456.9" cy="605" r="2.948" fill="#7f3f00"/><circle cx="474.9" cy="551" r="6.7" fill="#fddb7c"/><circle cx="474.9" cy="551" r="5.025" fill="#b4e65c"/><circle cx="474.9" cy="551" r="2.948" fill="#00c000"/><circle cx="474.9" cy="605" r="6.7" fill="#fddb7c"/><circle cx="474.9" cy="605" r="5.025" fill="#ff8a4a"/><circle cx="474.9" cy="605" r="2.948" fill="#7f3f00"/><circle cx="492.9" cy="551" r="6.7" fill="#fddb7c"/><circle cx="492.9" cy="551" r="5.025" fill="#b4e65c"/><circle cx="492.9" cy="551" r="2.948" fill="#00c000"/><circle cx="492.9" cy="605" r="6.7" fill="#fddb7c"/><circle cx="492.9" cy="605" r="5.025" fill="#ff8a4a"/><circle cx="492.9" cy="605" r="2.948" fill="#7f3f00"/><circle cx="510.9" cy="551" r="6.7" fill="#fddb7c"/><circle cx="510.9" cy="551" r="5.025" fill="#ff8a4a"/><circle cx="510.9" cy="551" r="2.948" fill="#7f3f00"/><circle cx="510.9" cy="605" r="6.7" fill="#fddb7c"/><circle cx="510.9" cy="605" r="5.025" fill="#ff8a4a"/><circle cx="510.9" cy="605" r="2.948" fill="#7f3f00"/><circle cx="554.1" cy="521.8" r="5" fill="none" stroke="#fddb7c" stroke-width="3.4"/><circle cx="572.07" cy="521.8" r="5" fill="none" stroke="#fddb7c" stroke-width="3.4"/><circle cx="590.04" cy="521.8" r="5" fill="none" stroke="#fddb7c" stroke-width="3.4"/><circle cx="608.01" cy="521.8" r="5" fill="none" stroke="#fddb7c" stroke-width="3.4"/><circle cx="625.98" cy="521.8" r="5" fill="none" stroke="#fddb7c" stroke-width="3.4"/><circle cx="643.95" cy="521.8" r="5" fill="none" stroke="#fddb7c" stroke-width="3.4"/><circle cx="661.92" cy="521.8" r="6.7" fill="#fddb7c"/><circle cx="661.92" cy="521.8" r="5.025" fill="#b4e65c"/><circle cx="661.92" cy="521.8" r="2.948" fill="#00c000"/><circle cx="679.89" cy="521.8" r="5" fill="none" stroke="#fddb7c" stroke-width="3.4"/><circle cx="554.1" cy="683.8" r="5" fill="none" stroke="#fddb7c" stroke-width="3.4"/><circle cx="572.07" cy="683.8" r="5" fill="none" stroke="#fddb7c" stroke-width="3.4"/><circle cx="590.04" cy="683.8" r="5" fill="none" stroke="#fddb7c" stroke-width="3.4"/><circle cx="608.01" cy="683.8" r="6.7" fill="#fddb7c"/><circle cx="608.01" cy="683.8" r="5.025" fill="#b4e65c"/><circle cx="608.01" cy="683.8" r="2.948" fill="#00c000"/><circle cx="625.98" cy="683.8" r="6.7" fill="#fddb7c"/><circle cx="625.98" cy="683.8" r="5.025" fill="#b4e65c"/><circle cx="625.98" cy="683.8" r="2.948" fill="#00c000"/><circle cx="643.95" cy="683.8" r="6.7" fill="#fddb7c"/><circle cx="643.95" cy="683.8" r="5.025" fill="#b4e65c"/><circle cx="643.95" cy="683.8" r="2.948" fill="#00c000"/><circle cx="661.92" cy="683.8" r="6.7" fill="#fddb7c"/><circle cx="661.92" cy="683.8" r="5.025" fill="#b4e65c"/><circle cx="661.92" cy="683.8" r="2.948" fill="#00c000"/><circle cx="679.89" cy="683.8" r="6.7" fill="#fddb7c"/><circle cx="679.89" cy="683.8" r="5.025" fill="#b4e65c"/><circle cx="679.89" cy="683.8" r="2.948" fill="#00c000"/><circle cx="295" cy="635.4" r="6.6" fill="#fddb7c"/><circle cx="295" cy="635.4" r="4.95" fill="#b4e65c"/><circle cx="295" cy="635.4" r="2.904" fill="#00c000"/><circle cx="366.9" cy="635.4" r="6.6" fill="#fddb7c"/><circle cx="366.9" cy="635.4" r="4.95" fill="#b4e65c"/><circle cx="366.9" cy="635.4" r="2.904" fill="#00c000"/><circle cx="247.8" cy="656.5" r="6.6" fill="#fddb7c"/><circle cx="247.8" cy="656.5" r="4.95" fill="#b4e65c"/><circle cx="247.8" cy="656.5" r="2.904" fill="#00c000"/><circle cx="280.2" cy="656.5" r="6.6" fill="#fddb7c"/><circle cx="280.2" cy="656.5" r="4.95" fill="#b4e65c"/><circle cx="280.2" cy="656.5" r="2.904" fill="#00c000"/><circle cx="247.8" cy="702.8" r="6.6" fill="#fddb7c"/><circle cx="247.8" cy="702.8" r="4.95" fill="#b4e65c"/><circle cx="247.8" cy="702.8" r="2.904" fill="#00c000"/><circle cx="280.2" cy="702.8" r="6.6" fill="#fddb7c"/><circle cx="280.2" cy="702.8" r="4.95" fill="#b4e65c"/><circle cx="280.2" cy="702.8" r="2.904" fill="#00c000"/><circle cx="385.5" cy="668.5" r="6.6" fill="#fddb7c"/><circle cx="385.5" cy="668.5" r="4.95" fill="#b4e65c"/><circle cx="385.5" cy="668.5" r="2.904" fill="#00c000"/><circle cx="385.5" cy="684.3" r="6.6" fill="#fddb7c"/><circle cx="385.5" cy="684.3" r="4.95" fill="#b4e65c"/><circle cx="385.5" cy="684.3" r="2.904" fill="#00c000"/><circle cx="421.3" cy="668.5" r="6.6" fill="#fddb7c"/><circle cx="421.3" cy="668.5" r="4.95" fill="#b4e65c"/><circle cx="421.3" cy="668.5" r="2.904" fill="#00c000"/><circle cx="421.3" cy="684.3" r="6.6" fill="#fddb7c"/><circle cx="421.3" cy="684.3" r="4.95" fill="#b4e65c"/><circle cx="421.3" cy="684.3" r="2.904" fill="#00c000"/><circle cx="421" cy="642.7" r="6.6" fill="#fddb7c"/><circle cx="421" cy="642.7" r="4.95" fill="#b4e65c"/><circle cx="421" cy="642.7" r="2.904" fill="#00c000"/><circle cx="455.8" cy="642.7" r="6.6" fill="#fddb7c"/><circle cx="455.8" cy="642.7" r="4.95" fill="#b4e65c"/><circle cx="455.8" cy="642.7" r="2.904" fill="#00c000"/><text x="244" y="391" font-family="Liberation Mono" font-size="7.5" fill="#000" text-anchor="middle" letter-spacing="0">J1</text><text x="272.5" y="420" font-family="Liberation Mono" font-size="6.5" fill="#000" text-anchor="middle" letter-spacing="0">C6</text><text x="476.3" y="450" font-family="Liberation Mono" font-size="7.5" fill="#000" text-anchor="middle" letter-spacing="0.86">DS3231 RCT Modul</text><text x="380.8" y="581" font-family="Liberation Mono" font-size="7.5" fill="#000" text-anchor="middle" letter-spacing="0.76">U1 Arduino 328</text><text x="333" y="628" font-family="Liberation Mono" font-size="7" fill="#000" text-anchor="middle" letter-spacing="0">R1</text><text x="437" y="659" font-family="Liberation Mono" font-size="7" fill="#000" text-anchor="middle" letter-spacing="0">XTAL1</text><text font-family="Liberation Mono" font-size="6.5" fill="#000" text-anchor="middle" transform="translate(403.5 679.2) rotate(180)">C3</text><text font-family="Liberation Mono" font-size="6.5" fill="#000" text-anchor="middle" transform="translate(404 692.8) rotate(180)">C4</text><text x="233" y="680" font-family="Liberation Mono" font-size="7" fill="#000" text-anchor="middle" transform="rotate(90 233 680)" letter-spacing="0">S1</text><text x="714.5" y="406" font-family="Liberation Mono" font-size="7.5" fill="#000" text-anchor="middle" transform="rotate(90 714.5 406)" letter-spacing="0.5">BMP 280</text><text x="684.5" y="526" font-family="Liberation Sans" font-size="12.5" fill="#000" text-anchor="middle" transform="rotate(90 684.5 526)" letter-spacing="0">BAT1</text><text x="716" y="594.5" font-family="Liberation Mono" font-size="7.5" fill="#000" text-anchor="middle" transform="rotate(-90 716 594.5)" letter-spacing="0.85">WeMos D1 Mini Micro SD Shield1</text><text x="612" y="602.5" font-family="Liberation Sans" font-size="9.8" fill="#000" text-anchor="middle" transform="rotate(-90 612 602.5)" letter-spacing="0">WeMos D1 mini</text><text x="630" y="602.5" font-family="Liberation Sans" font-size="9.6" fill="#000" text-anchor="middle" transform="rotate(-90 630 602.5)" letter-spacing="0">Micro SD Shield</text><text x="557.4" y="531" font-family="Liberation Sans" font-size="9" fill="#000" text-anchor="end" transform="rotate(-90 557.4 531)">TX</text><text x="575.37" y="531" font-family="Liberation Sans" font-size="9" fill="#000" text-anchor="end" transform="rotate(-90 575.37 531)">RX</text><text x="593.34" y="531" font-family="Liberation Sans" font-size="9" fill="#000" text-anchor="end" transform="rotate(-90 593.34 531)">D1</text><text x="611.31" y="531" font-family="Liberation Sans" font-size="9" fill="#000" text-anchor="end" transform="rotate(-90 611.31 531)">D2</text><text x="629.28" y="531" font-family="Liberation Sans" font-size="9" fill="#000" text-anchor="end" transform="rotate(-90 629.28 531)">D3</text><text x="647.25" y="531" font-family="Liberation Sans" font-size="9" fill="#000" text-anchor="end" transform="rotate(-90 647.25 531)">D4</text><text x="665.22" y="531" font-family="Liberation Sans" font-size="9" fill="#000" text-anchor="end" transform="rotate(-90 665.22 531)">GND</text><text x="683.19" y="531" font-family="Liberation Sans" font-size="9" fill="#000" text-anchor="end" transform="rotate(-90 683.19 531)">5V</text><text x="557.4" y="672" font-family="Liberation Sans" font-size="9" fill="#000" text-anchor="start" transform="rotate(-90 557.4 672)">RST</text><text x="575.37" y="672" font-family="Liberation Sans" font-size="9" fill="#000" text-anchor="start" transform="rotate(-90 575.37 672)">A0</text><text x="593.34" y="672" font-family="Liberation Sans" font-size="9" fill="#000" text-anchor="start" transform="rotate(-90 593.34 672)">D0</text><text x="611.31" y="672" font-family="Liberation Sans" font-size="9" fill="#000" text-anchor="start" transform="rotate(-90 611.31 672)">D5</text><text x="629.28" y="672" font-family="Liberation Sans" font-size="9" fill="#000" text-anchor="start" transform="rotate(-90 629.28 672)">D6</text><text x="647.25" y="672" font-family="Liberation Sans" font-size="9" fill="#000" text-anchor="start" transform="rotate(-90 647.25 672)">D7</text><text x="665.22" y="672" font-family="Liberation Sans" font-size="9" fill="#000" text-anchor="start" transform="rotate(-90 665.22 672)">D8</text><text x="683.19" y="672" font-family="Liberation Sans" font-size="9" fill="#000" text-anchor="start" transform="rotate(-90 683.19 672)">3V3</text></svg><svg style="left:0;top:0" width="200" height="900"><g fill="none" stroke="#878787" stroke-width="2.8" stroke-linecap="round" stroke-linejoin="round"><path d="M39.6 855 V839.5 Q39.6 835 44 835 H46"/><path d="M35.2 842 H44.6"/><path d="M52 853 V842 M52 848 Q52 842 58 842 H60"/><circle cx="52" cy="855.6" r="2.4" stroke-width="2"/><path d="M69 842 V855"/><circle cx="69" cy="834.6" r="2.4" stroke-width="2"/><path d="M80.1 835 V851.5 Q80.1 855.6 84 855.6 H85.4 M76 842 H86"/><path d="M91.8 842 H101.2 L91.2 855.6 H102"/><circle cx="104.5" cy="855.7" r="2.4" stroke-width="2"/><path d="M114 842 V855"/><circle cx="114" cy="834.6" r="2.4" stroke-width="2"/><path d="M122.9 855 V842 M122.9 848 Q122.9 842 128.8 842 Q134.6 842 134.6 848 V853"/><circle cx="134.6" cy="855.7" r="2.4" stroke-width="2"/><path d="M155.6 842 V860 Q155.6 864 151.6 864 H143.5 M155.6 842 H147 Q142.2 842 142.2 847 V851 Q142.2 855.5 147 855.5 H155.6"/></g></svg><div class="a" style="left:999px;top:88px;width:10px;height:798px;background:#e6edf0;"></div>
<div class="a" style="left:999px;top:386px;width:10px;height:390px;background:#b4b4b4;"></div>
<div class="a" style="left:0px;top:886px;width:999px;height:10px;background:#e6edf0;"></div>
<div class="a" style="left:443px;top:886px;width:482px;height:10px;background:#b4b4b4;"></div>
<div class="a" style="left:999px;top:886px;width:10px;height:10px;background:#eef1f2;"></div>
<div class="a" style="left:1009px;top:53px;width:6px;height:930px;background:#666;"></div>
<div class="a" style="left:1009px;top:281px;width:271px;height:6px;background:#666;"></div>
<div class="a" style="left:1009px;top:515px;width:271px;height:6px;background:#666;"></div>
<div class="a" style="left:1009px;top:750px;width:271px;height:6px;background:#666;"></div>
<div class="a" style="left:1015px;top:53px;width:265px;height:228px;background:#dadada;"></div>
<div class="t" style="left:1026px;top:56.17px;font-size:13.5px;color:#7a7a7a;font-family:'Liberation Sans',sans-serif;transform:scaleX(1.0248);transform-origin:0 0;">Bauteile</div>
<div class="a" style="left:1015px;top:73px;width:265px;height:1px;background:#bababa;"></div>
<div class="a" style="left:1015px;top:73px;width:32px;height:32px;background:#b3b3b3;"></div>
<div class="a" style="left:1015px;top:137px;width:32px;height:113px;background:#b3b3b3;"></div>
<div class="a" style="left:1015px;top:250px;width:32px;height:31px;background:#cfcfcf;"></div>
<div class="a" style="left:1015px;top:265px;width:32px;height:1px;background:#c4c4c4;"></div>
<div class="t" style="left:1018.5px;top:113.77px;font-size:13.5px;color:#111;font-family:'Liberation Sans',sans-serif;font-weight:bold;transform:scaleX(0.6666);transform-origin:0 0;">CORE</div>
<div class="t" style="left:1018.8px;top:146.85px;font-size:13.5px;color:#666;font-family:'Liberation Mono',monospace;transform:scaleX(0.8024);transform-origin:0 0;">MINE</div>
<div class="t" style="left:1019.7px;top:178.85px;font-size:13.5px;color:#666;font-family:'Liberation Mono',monospace;transform:scaleX(0.9464);transform-origin:0 0;">SIM</div>
<div class="t" style="left:1056px;top:81.27px;font-size:13.5px;color:#333;font-family:'Liberation Sans',sans-serif;font-weight:bold;transform:scaleX(1.0032);transform-origin:0 0;">Core Parts</div>
<div class="a" style="left:1050px;top:99px;width:227px;height:1px;background:#b5b5b5;"></div>
<div class="t" style="left:1053px;top:220.92px;font-size:12.5px;color:#6a6a6a;font-family:'Liberation Sans',sans-serif;transform:scaleX(0.9524);transform-origin:0 0;">Werkzeuge</div>
<svg style="left:1000px;top:50px" width="280" height="240"><rect x="253" y="10" width="6.5" height="5" fill="none" stroke="#777" stroke-width="1.5"/><rect x="250.5" y="12.5" width="6.5" height="5" fill="#777" stroke="#777" stroke-width="1.5"/><path d="M266 10 l8 8 M274 10 l-8 8" stroke="#777" stroke-width="1.5"/><circle cx="28.9" cy="35.2" r="5.8" fill="none" stroke="#404040" stroke-width="2"/><path d="M33.6 40.3 L40 46.5" stroke="#404040" stroke-width="2.8"/><path d="M264 34 h4 l-2 2.5 z" fill="#555"/><path d="M270 33.5 h7 M270 36 h7 M270 38.5 h7 M270 41 h7" stroke="#555" stroke-width="1"/><g fill="none" stroke="#787878" stroke-width="2.1"><ellipse cx="24" cy="166" rx="6.9" ry="6.2"/><ellipse cx="38.4" cy="166" rx="6.9" ry="6.2"/><path d="M21.6 166 h4.2 M36.3 166 h4.2 M38.4 163.9 v4.2" stroke-width="1.6"/></g><path d="M24 200 q0 -5.5 4.5 -6 q2.2 -0.2 1.6 1.8 q-0.6 1.8 1.6 1.3 q1.8 -0.6 0.6 -3 q-1.6 -3 2.6 -6.5 q-1 2.5 1 4 q3 2.2 2.4 8.4 z" fill="#444"/><path d="M24.5 212.4 L30.8 204 L37.1 212.4 z" fill="#a9a9a9"/><path d="M24.5 218 L30.8 227.3 L37.1 218 z" fill="#a9a9a9"/></svg><div class="a" style="left:1015px;top:103px;width:250px;height:172px;overflow:hidden"><svg style="left:-1015px;top:-103px" width="1280" height="300"><rect x="1053.5" y="77.5" width="41" height="41" fill="#fff" stroke="#111" stroke-width="1.3"/><rect x="1100.5" y="77.5" width="41" height="41" fill="#fff" stroke="#111" stroke-width="1.3"/><rect x="1147.5" y="77.5" width="41" height="41" fill="#fff" stroke="#111" stroke-width="1.3"/><rect x="1194.5" y="77.5" width="41" height="41" fill="#fff" stroke="#111" stroke-width="1.3"/><path d="M1109.8 120 V109.8 L1116.5 102.5" stroke="#f0c419" stroke-width="2" fill="none"/><path d="M1121 101 L1129 107.5" stroke="#2f7fd6" stroke-width="4.2"/><path d="M1128.5 106.5 L1133 111" stroke="#8a8a8a" stroke-width="2.6"/><circle cx="1132.5" cy="109.8" r="3.9" fill="none" stroke="#fcdc6e" stroke-width="2"/><path d="M1165.3 120 V109 L1172 102.3" stroke="#f79a33" stroke-width="2" fill="none"/><path d="M1214.5 120 V114.5 L1226.5 102.5" stroke="#f79a33" stroke-width="2" fill="none"/><path d="M1199 103.3 H1220" stroke="#cfcfcf" stroke-width="1"/><rect x="1053.5" y="124.5" width="41" height="41" fill="#fff" stroke="#111" stroke-width="1.3"/><rect x="1100.5" y="124.5" width="41" height="41" fill="#fff" stroke="#111" stroke-width="1.3"/><rect x="1147.5" y="124.5" width="41" height="41" fill="#fff" stroke="#111" stroke-width="1.3"/><rect x="1194.5" y="124.5" width="41" height="41" fill="#fcdc6e" stroke="#111" stroke-width="1.3"/><circle cx="1073.9" cy="145" r="11.1" fill="none" stroke="#fcdc6e" stroke-width="4.3"/><path d="M1100.5 159 H1117.7 L1121.4 155.2 V149" stroke="#e8d84a" stroke-width="3" fill="none"/><path d="M1120.8 139.5 V134.5 Q1120.8 130.2 1125 130.2 H1142" stroke="#f79a33" stroke-width="3" fill="none"/><circle cx="1120.8" cy="145" r="4.4" fill="#fff" stroke="#f79a33" stroke-width="2.2"/><rect x="1159" y="133" width="18" height="23" fill="#fcdc6e"/><rect x="1206" y="133.3" width="18" height="23.4" fill="#fff"/><path d="M1206 133.3 L1224 156.7 M1224 133.3 L1206 156.7" stroke="#fcdc6e" stroke-width="2.4"/><rect x="1053.5" y="171.5" width="41" height="41" fill="#fff" stroke="#111" stroke-width="1.3"/><path d="M1054 172 L1075 188 L1082 182 L1090 189 L1088 199 L1094 202 L1079 210 L1073 204 L1064 212 L1056 201 L1063 190 Z" fill="#fcdc6e"/><rect x="1053" y="239" width="42" height="40" fill="#fff"/><path d="M1060.4 280 V246 H1078.6 L1088.7 256.2 V280" fill="none" stroke="#7c7c7c" stroke-width="2.4"/><path d="M1078.6 246 V256.2 H1088.7" fill="none" stroke="#7c7c7c" stroke-width="2.4"/><rect x="1100" y="239" width="42" height="40" fill="#fff"/><path d="M1102 280 V241 H1146 V280" fill="none" stroke="#6e0b26" stroke-width="1.8"/><path d="M1104.5 240 v9 M1108.5 243 v6 M1112.5 243 v6 M1116.5 240 v9 M1120.5 243 v6 M1124.5 243 v6 M1128.5 240 v9 M1132.5 243 v6 M1136.5 243 v6 M1140.5 240 v9" stroke="#111" stroke-width="1.6"/><text x="1103.5" y="258.7" font-size="12" font-family="Liberation Sans" fill="#111">cm</text><text x="1103.5" y="269.9" font-size="12" font-family="Liberation Sans" fill="#111">in</text><path d="M1104.5 273 v3 M1109.5 273 v3 M1114.5 273 v3 M1119.5 273 v3 M1124.5 273 v3 M1129.5 273 v3 M1134.5 273 v3 M1139.5 273 v3" stroke="#111" stroke-width="1.3"/></svg></div><div class="a" style="left:1264px;top:256px;width:10px;height:10px;background:#b8b8b8;border-radius:1px"></div>
<div class="a" style="left:1015px;top:287px;width:265px;height:228px;background:#dadada;"></div>
<div class="t" style="left:1025px;top:290.47px;font-size:13.5px;color:#6a6a6a;font-family:'Liberation Sans',sans-serif;transform:scaleX(1.0715);transform-origin:0 0;">Inspektor</div>
<div class="a" style="left:1020px;top:307px;width:239px;height:4px;background:#d2d2d8;"></div>
<div class="a" style="left:1024px;top:325px;width:74px;height:74px;background:#fff;"></div>
<div class="a" style="left:1104px;top:325px;width:74px;height:74px;background:#fff;"></div>
<div class="a" style="left:1183px;top:325px;width:74px;height:74px;background:#fff;"></div>
<div class="a" style="left:1019px;top:428px;width:242px;height:1px;background:#9a9a9a;"></div>
<div class="a" style="left:1019px;top:444px;width:242px;height:1px;background:#9a9a9a;"></div>
<div class="a" style="left:1265px;top:327px;width:10px;height:177px;background:#b3b3b3;border-radius:2px"></div>
<div class="a" style="left:1015px;top:505px;width:250px;height:10px;background:#b3b3b3;"></div>
<div class="a" style="left:1265px;top:505px;width:10px;height:10px;background:#e6e6e6;"></div>
<svg style="left:1000px;top:284px" width="280" height="30"><rect x="253" y="10" width="6.5" height="5" fill="none" stroke="#777" stroke-width="1.5"/><rect x="250.5" y="12.5" width="6.5" height="5" fill="#777" stroke="#777" stroke-width="1.5"/><path d="M266 10 l8 8 M274 10 l-8 8" stroke="#777" stroke-width="1.5"/></svg><div class="a" style="left:1015px;top:521px;width:265px;height:229px;background:#dadada;"></div>
<div class="t" style="left:1025px;top:524.07px;font-size:13.5px;color:#6a6a6a;font-family:'Liberation Sans',sans-serif;transform:scaleX(1.0468);transform-origin:0 0;">Verlauf</div>
<div class="a" style="left:1015px;top:541px;width:265px;height:1px;background:#a8a8a8;"></div>
<svg style="left:1000px;top:518px" width="280" height="30"><rect x="253" y="10" width="6.5" height="5" fill="none" stroke="#777" stroke-width="1.5"/><rect x="250.5" y="12.5" width="6.5" height="5" fill="#777" stroke="#777" stroke-width="1.5"/><path d="M266 10 l8 8 M274 10 l-8 8" stroke="#777" stroke-width="1.5"/></svg><div class="a" style="left:1015px;top:542px;width:254px;height:196px;overflow:hidden"><div class="t" style="left:4px;top:1.22px;font-size:12.5px;color:#1a1a1a;font-family:'Liberation Sans',sans-serif;transform:scaleX(1.0976);transform-origin:0 0;">Draht erstellen und verbinden</div>
<div class="t" style="left:4px;top:15.22px;font-size:12.5px;color:#1a1a1a;font-family:'Liberation Sans',sans-serif;transform:scaleX(1.0976);transform-origin:0 0;">Draht erstellen und verbinden</div>
<div class="t" style="left:4px;top:29.22px;font-size:12.5px;color:#1a1a1a;font-family:'Liberation Sans',sans-serif;transform:scaleX(1.0976);transform-origin:0 0;">Ruler hinzufügen</div>
<div class="t" style="left:4px;top:43.22px;font-size:12.5px;color:#1a1a1a;font-family:'Liberation Sans',sans-serif;transform:scaleX(1.0976);transform-origin:0 0;">Draht erstellen und verbinden</div>
<div class="t" style="left:4px;top:57.22px;font-size:12.5px;color:#1a1a1a;font-family:'Liberation Sans',sans-serif;transform:scaleX(1.0976);transform-origin:0 0;">Ruler verschieben (Leiterplattenansicht)</div>
<div class="t" style="left:4px;top:71.22px;font-size:12.5px;color:#1a1a1a;font-family:'Liberation Sans',sans-serif;transform:scaleX(1.0976);transform-origin:0 0;">Delete Ruler</div>
<div class="t" style="left:4px;top:85.22px;font-size:12.5px;color:#1a1a1a;font-family:'Liberation Sans',sans-serif;transform:scaleX(1.0976);transform-origin:0 0;">Battery Holders verschieben (Leiterplattenansicht)</div>
<div class="t" style="left:4px;top:99.22px;font-size:12.5px;color:#1a1a1a;font-family:'Liberation Sans',sans-serif;transform:scaleX(1.0976);transform-origin:0 0;">Battery Holders verschieben (Leiterplattenansicht)</div>
<div class="t" style="left:4px;top:113.22px;font-size:12.5px;color:#1a1a1a;font-family:'Liberation Sans',sans-serif;transform:scaleX(1.0976);transform-origin:0 0;">Ruler hinzufügen</div>
<div class="t" style="left:4px;top:127.22px;font-size:12.5px;color:#1a1a1a;font-family:'Liberation Sans',sans-serif;transform:scaleX(1.0976);transform-origin:0 0;">Ändere Wire</div>
<div class="t" style="left:4px;top:141.22px;font-size:12.5px;color:#1a1a1a;font-family:'Liberation Sans',sans-serif;transform:scaleX(1.0976);transform-origin:0 0;">Ruler verschieben (Leiterplattenansicht)</div>
<div class="t" style="left:4px;top:155.22px;font-size:12.5px;color:#1a1a1a;font-family:'Liberation Sans',sans-serif;transform:scaleX(1.0976);transform-origin:0 0;">Ruler verschieben (Leiterplattenansicht)</div>
<div class="t" style="left:4px;top:169.22px;font-size:12.5px;color:#1a1a1a;font-family:'Liberation Sans',sans-serif;transform:scaleX(1.0976);transform-origin:0 0;">Ändere Wire</div>
<div class="t" style="left:4px;top:183.22px;font-size:12.5px;color:#555;font-family:'Liberation Sans',sans-serif;transform:scaleX(1.0976);transform-origin:0 0;">Delete Ruler</div>
</div><div class="a" style="left:1015px;top:739px;width:254px;height:10px;background:#dadada;"></div>
<div class="a" style="left:1015px;top:739px;width:158px;height:10px;background:#b3b3b3;border-radius:2px"></div>
<div class="a" style="left:1269px;top:725px;width:10px;height:14px;background:#b3b3b3;"></div>
<div class="a" style="left:1269px;top:739px;width:10px;height:10px;background:#e6e6e6;"></div>
<div class="a" style="left:1279px;top:542px;width:1px;height:207px;background:#aaaaaa;"></div>
<div class="a" style="left:1015px;top:756px;width:265px;height:227px;background:#dadada;"></div>
<div class="t" style="left:1025px;top:760.07px;font-size:13.5px;color:#6a6a6a;font-family:'Liberation Sans',sans-serif;transform:scaleX(0.9990);transform-origin:0 0;">Ebenen</div>
<div class="a" style="left:1015px;top:776px;width:265px;height:1px;background:#a8a8a8;"></div>
<svg style="left:1000px;top:753px" width="280" height="30"><rect x="253" y="10" width="6.5" height="5" fill="none" stroke="#777" stroke-width="1.5"/><rect x="250.5" y="12.5" width="6.5" height="5" fill="#777" stroke="#777" stroke-width="1.5"/><path d="M266 10 l8 8 M274 10 l-8 8" stroke="#777" stroke-width="1.5"/></svg><div class="a" style="left:1015px;top:777px;width:254px;height:206px;overflow:hidden"><div class="t" style="left:26px;top:10.92px;font-size:12.5px;color:#1e1e1e;font-family:'Liberation Sans',sans-serif;transform:scaleX(1.0842);transform-origin:0 0;">Leiterplatten-Ebene</div>
<div class="t" style="left:26px;top:31.92px;font-size:12.5px;color:#1e1e1e;font-family:'Liberation Sans',sans-serif;transform:scaleX(1.0842);transform-origin:0 0;">Kupferfüllung Unterseite-Ebene</div>
<div class="t" style="left:26px;top:52.92px;font-size:12.5px;color:#1e1e1e;font-family:'Liberation Sans',sans-serif;transform:scaleX(1.0842);transform-origin:0 0;">Siebdruck unten-Ebene</div>
<div class="t" style="left:26px;top:73.92px;font-size:12.5px;color:#1e1e1e;font-family:'Liberation Sans',sans-serif;transform:scaleX(1.0842);transform-origin:0 0;">Siebdruck unten (Bauteilbezeichnungen)-Ebene</div>
<div class="t" style="left:26px;top:94.92px;font-size:12.5px;color:#1e1e1e;font-family:'Liberation Sans',sans-serif;transform:scaleX(1.0842);transform-origin:0 0;">Kupfer unten-Ebene</div>
<div class="t" style="left:26px;top:115.92px;font-size:12.5px;color:#1e1e1e;font-family:'Liberation Sans',sans-serif;transform:scaleX(1.0842);transform-origin:0 0;">Kupfern unten (Leiterbahnen)-Ebene</div>
<div class="t" style="left:26px;top:136.92px;font-size:12.5px;color:#1e1e1e;font-family:'Liberation Sans',sans-serif;transform:scaleX(1.0842);transform-origin:0 0;">Kuperfüllung Oberseite-Ebene</div>
<div class="t" style="left:26px;top:157.92px;font-size:12.5px;color:#1e1e1e;font-family:'Liberation Sans',sans-serif;transform:scaleX(1.0842);transform-origin:0 0;">Kupfer oben-Ebene</div>
<div class="t" style="left:26px;top:178.92px;font-size:12.5px;color:#1e1e1e;font-family:'Liberation Sans',sans-serif;transform:scaleX(1.0842);transform-origin:0 0;">Kupfer oben (Leiterbahnen)-Ebene</div>
<div class="t" style="left:26px;top:199.92px;font-size:12.5px;color:#1e1e1e;font-family:'Liberation Sans',sans-serif;transform:scaleX(1.0842);transform-origin:0 0;">Siebdruck oben-Ebene</div>
<svg style="left:0;top:0" width="254" height="210"><path d="M11 16.5 l3 3 l6 -6" fill="none" stroke="#777" stroke-width="1.2"/><path d="M11 37.5 l3 3 l6 -6" fill="none" stroke="#777" stroke-width="1.2"/><path d="M11 58.5 l3 3 l6 -6" fill="none" stroke="#777" stroke-width="1.2"/><path d="M11 79.5 l3 3 l6 -6" fill="none" stroke="#777" stroke-width="1.2"/><path d="M11 100.5 l3 3 l6 -6" fill="none" stroke="#777" stroke-width="1.2"/><path d="M11 121.5 l3 3 l6 -6" fill="none" stroke="#777" stroke-width="1.2"/><path d="M11 142.5 l3 3 l6 -6" fill="none" stroke="#777" stroke-width="1.2"/><path d="M11 163.5 l3 3 l6 -6" fill="none" stroke="#777" stroke-width="1.2"/><path d="M11 184.5 l3 3 l6 -6" fill="none" stroke="#777" stroke-width="1.2"/><path d="M11 205.5 l3 3 l6 -6" fill="none" stroke="#777" stroke-width="1.2"/></svg></div><div class="a" style="left:1269px;top:777px;width:10px;height:112px;background:#b3b3b3;border-radius:2px"></div>
<div class="a" style="left:0px;top:896px;width:1009px;height:66px;background:#d5311f;"></div>
<div class="a" style="left:0px;top:962px;width:1009px;height:21px;background:#841e0a;"></div>
<div class="t" style="left:22px;top:935.20px;font-size:13px;color:#f6e0dc;font-family:'Liberation Sans',sans-serif;transform:scaleX(1.0085);transform-origin:0 0;">Drehen</div>
<div class="t" style="left:97px;top:935.20px;font-size:13px;color:#f6e0dc;font-family:'Liberation Sans',sans-serif;transform:scaleX(1.0245);transform-origin:0 0;">Ansic... oben</div>
<div class="t" style="left:193px;top:935.20px;font-size:13px;color:#f6e0dc;font-family:'Liberation Sans',sans-serif;transform:scaleX(1.0173);transform-origin:0 0;">Beide Seiten</div>
<div class="t" style="left:292px;top:935.20px;font-size:13px;color:#f6e0dc;font-family:'Liberation Sans',sans-serif;transform:scaleX(1.0466);transform-origin:0 0;">Autoroute</div>
<div class="t" style="left:372px;top:935.20px;font-size:13px;color:#f6e0dc;font-family:'Liberation Sans',sans-serif;transform:scaleX(1.0522);transform-origin:0 0;">Platine...rtieren</div>
<div class="t" style="left:568px;top:909.83px;font-size:16.5px;color:#f29f8a;font-family:'Liberation Sans',sans-serif;transform:scaleX(0.9906);transform-origin:0 0;">Routing fertiggestellt</div>
<div class="a" style="left:818px;top:901px;width:83px;height:56px;background:#5c4a46;"></div>
<div class="a" style="left:818px;top:952px;width:83px;height:5px;background:#3f3330;"></div>
<div class="t" style="left:830px;top:931.80px;font-size:13px;color:#f4eeee;font-family:'Liberation Sans',sans-serif;transform:scaleX(1.0166);transform-origin:0 0;">Herstellen</div>
<div class="a" style="left:916px;top:901px;width:83px;height:56px;background:#00a25a;"></div>
<div class="a" style="left:916px;top:952px;width:83px;height:5px;background:#076a39;"></div>
<div class="t" style="left:916px;top:935.00px;font-size:13px;color:#e8f6ee;font-family:'Liberation Sans',sans-serif;transform:scaleX(1.0441);transform-origin:0 0;">Veröff...lichen</div>
<div class="t" style="left:714.5px;top:967.53px;font-size:10px;color:#f4dcd6;font-family:'Liberation Sans',sans-serif;transform:scaleX(0.8901);transform-origin:0 0;">(x,y)=(4.844, 2.111) in</div>
<div class="t" style="left:815px;top:965.50px;font-size:13px;color:#f4e6e2;font-family:'Liberation Sans',sans-serif;transform:scaleX(1.0038);transform-origin:0 0;">200 %</div>
<svg style="left:0;top:890px" width="1009" height="93"><path d="M41.9 14.1 A10.5 10.5 0 1 0 51.9 24.6 V19" fill="none" stroke="#a3aaac" stroke-width="1.9"/><path d="M45.6 25.1 L51.9 18.6 L58.6 25.1" fill="none" stroke="#a3aaac" stroke-width="1.9"/><circle cx="78" cy="16" r="6" fill="#a06c6a"/><path d="M74.5 14 h7 l-3.5 4 z" fill="#fff"/><circle cx="173" cy="16" r="6" fill="#6a1a10"/><path d="M169.5 14 h7 l-3.5 4 z" fill="#fff"/><circle cx="268" cy="16" r="6" fill="#6a1a10"/><path d="M264.5 14 h7 l-3.5 4 z" fill="#fff"/><circle cx="461" cy="16" r="6" fill="#6a1a10"/><path d="M457.5 14 h7 l-3.5 4 z" fill="#fff"/><path d="M119 25 h33" stroke="#f3a592" stroke-width="1.8"/><path d="M136 12 v9 M132 17.5 l4 4 l4 -4" fill="none" stroke="#fff" stroke-width="1.8"/><path d="M214 25 h33" stroke="#fff" stroke-width="1.8"/><circle cx="224" cy="16.5" r="3" fill="none" stroke="#fff" stroke-width="1.8"/><circle cx="237" cy="16.5" r="3" fill="none" stroke="#fff" stroke-width="1.8"/><path d="M227 16.5 h7" stroke="#fff" stroke-width="1.8"/><circle cx="224" cy="33.5" r="3" fill="none" stroke="#fff" stroke-width="1.8"/><circle cx="237" cy="33.5" r="3" fill="none" stroke="#fff" stroke-width="1.8"/><path d="M227 33.5 h7" stroke="#fff" stroke-width="1.8"/><circle cx="311.1" cy="16.4" r="2.5" fill="none" stroke="#fff" stroke-width="1.8"/><path d="M313.6 16.4 H328 A4.7 4.7 0 0 1 328 25.8 H314.5 A3.5 3.5 0 0 0 314.5 32.8 H324" fill="none" stroke="#fff" stroke-width="1.8"/><path d="M320 28.5 L324.3 32.8 L320 37.1" fill="none" stroke="#fff" stroke-width="1.8"/><circle cx="331.7" cy="32.8" r="2.3" fill="none" stroke="#f3a592" stroke-width="1.6"/><path d="M421 19.5 h-16.5 v16 h26 v-8" fill="none" stroke="#fff" stroke-width="1.8"/><path d="M421 28 v-4 a6 6 0 0 1 6 -6 h6 M429 14 l4 4 l-4 4" fill="none" stroke="#fff" stroke-width="1.8"/><path d="M841.9 33.8 V30 Q841.9 25.6 846.3 25.6 H850 M846.6 21.6 L850.7 25.6 L846.6 29.7" fill="none" stroke="#fff" stroke-width="1.8"/><path d="M855.3 33.5 V28 L860.5 24 L863.5 27 L868 23.5 L871.5 26.5 L873.5 23.8 M876.3 18 V33.5 H855.3" fill="none" stroke="#fff" stroke-width="1.8"/><circle cx="892" cy="20" r="6" fill="#2e2321"/><path d="M888.5 18 h7 l-3.5 4 z" fill="#fff"/><path d="M942 37 v-6 a6 6 0 0 1 6 -6 h5 M950 21.5 l3.5 3.5 l-3.5 3.5" fill="none" stroke="#fff" stroke-width="2"/><rect x="957" y="19" width="7" height="7" fill="none" stroke="#fff" stroke-width="1.8"/><rect x="967" y="19" width="7" height="7" fill="none" stroke="#fff" stroke-width="1.8"/><rect x="957" y="29" width="7" height="7" fill="none" stroke="#fff" stroke-width="1.8"/><rect x="967" y="29" width="7" height="7" fill="none" stroke="#fff" stroke-width="1.8"/><circle cx="869" cy="82" r="6.5" fill="none" stroke="#f4e6e2" stroke-width="1.3"/><path d="M866 82 h6" stroke="#f4e6e2" stroke-width="1.3"/><path d="M883 80.5 h84" stroke="#e0392a" stroke-width="1.8"/><circle cx="893" cy="80" r="5.5" fill="#fff"/><circle cx="979" cy="82" r="6.5" fill="none" stroke="#f4e6e2" stroke-width="1.3"/><path d="M976 82 h6 M979 79 v6" stroke="#f4e6e2" stroke-width="1.3"/></svg><div class="a" style="left:0px;top:983px;width:1280px;height:41px;background:#2f2f2f;"></div>
<div class="t" style="left:1091px;top:997.70px;font-size:13px;color:#eaeef2;font-family:'Liberation Sans',sans-serif;font-weight:bold;transform:scaleX(1.0106);transform-origin:0 0;">Donnerstag, 29. Mai, 10:23:48</div>
<svg style="left:0;top:983px" width="1280" height="41"><circle cx="20.9" cy="20.6" r="14.75" fill="none" stroke="#f2f2f2" stroke-width="2.4"/><path d="M13.65 13 V24.5 Q13.65 27.4 16.5 27.4 H25.4 Q28.25 27.4 28.25 24.5 V18 Q28.25 15.6 25.8 15.6 Q23.4 15.6 23.4 18 V23.9 M23.4 18 Q23.4 15.6 21 15.6 Q18.5 15.6 18.5 18 V23.9" fill="none" stroke="#f2f2f2" stroke-width="2.7"/><path d="M994 13.2 Q990.2 15.6 986.7 15.1 V21 Q986.7 26 994 29 Q1001.3 26 1001.3 21 V15.1 Q997.8 15.6 994 13.2 Z" fill="none" stroke="#e8e8e8" stroke-width="1.7"/><path d="M994 16.4 Q991.6 17.8 989.7 17.7 V21.3 Q989.7 24.4 994 26.4 Q998.3 24.4 998.3 21.3 V17.7 Q996.4 17.8 994 16.4 Z" fill="#e8e8e8"/><rect x="1017.4" y="13.9" width="7.2" height="2.2" fill="#eee"/><rect x="1013.9" y="17.1" width="14.2" height="5.8" rx="1.6" fill="#eee"/><rect x="1016.6" y="21.9" width="8.8" height="5.5" fill="#eee" stroke="#2f2f2f" stroke-width="1"/><rect x="1040.9" y="13.9" width="12.2" height="14.2" rx="2" fill="none" stroke="#eee" stroke-width="1.8"/><path d="M1044 21 L1047 17.6 L1050 21 Z" fill="#eee"/><rect x="1044" y="22.6" width="6" height="1.2" fill="#eee"/><rect x="1069.8" y="13.9" width="5.1" height="5.1" fill="#eee"/><rect x="1065" y="23.8" width="5.1" height="5.1" fill="#eee"/><rect x="1075" y="23.8" width="5.1" height="5.1" fill="#eee"/><path d="M1072.35 19 V21.2 M1067.5 23.8 V21.2 H1077.6 V23.8" fill="none" stroke="#eee" stroke-width="1.3"/></svg></body></html>
